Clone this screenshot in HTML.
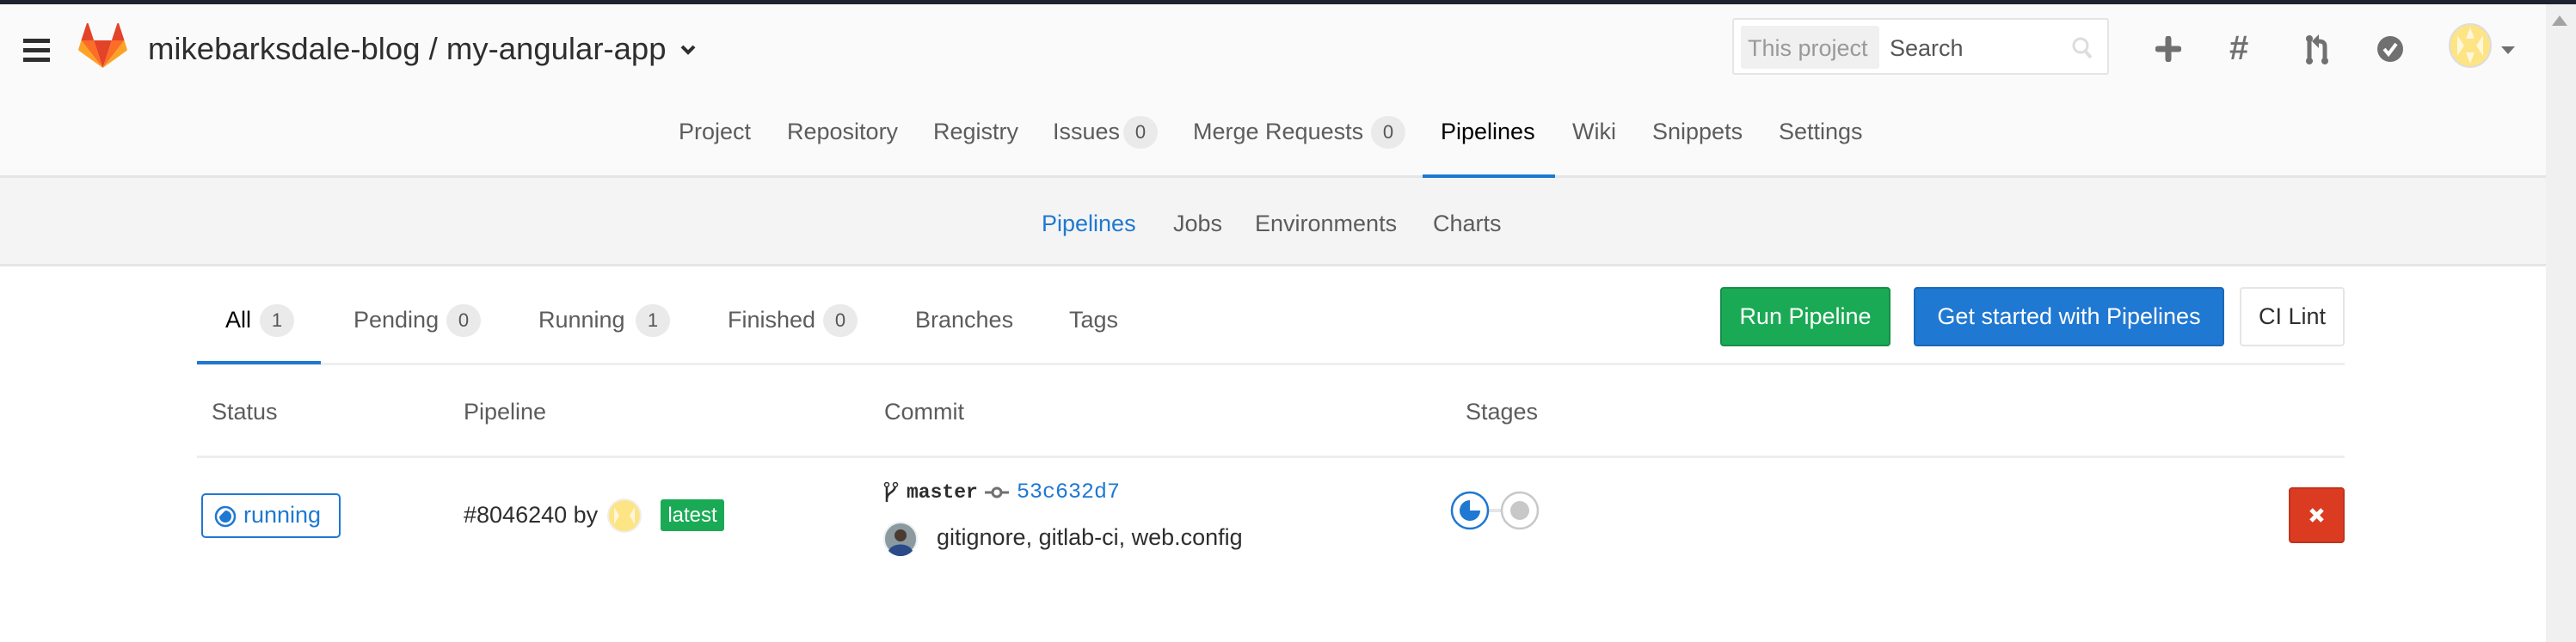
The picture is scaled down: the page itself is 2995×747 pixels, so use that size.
<!DOCTYPE html>
<html><head><meta charset="utf-8"><style>
*{margin:0;padding:0;box-sizing:border-box}
body{width:2995px;height:747px;overflow:hidden;background:#fff;font-family:"Liberation Sans",sans-serif;position:relative;color:#2e2e2e}
.a{position:absolute;white-space:nowrap}
.t{font-size:27px;line-height:40px}
.badge{position:absolute;background:#eaeaea;border-radius:20px;font-size:22px;line-height:38px;text-align:center;color:#555}
</style></head><body>
<div class="a" style="left:0;top:0;width:2995px;height:5px;background:#1f2330"></div>
<div class="a" style="left:0;top:5px;width:2960px;height:202px;background:#fafafa;border-bottom:3px solid #e5e5e5"></div>
<div class="a" style="left:0;top:207px;width:2960px;height:103px;background:#f4f4f4;border-bottom:3px solid #e5e5e5"></div>
<div class="a" style="left:2960px;top:5px;width:35px;height:742px;background:#f0f0f0"></div>
<div class="a" style="left:2967px;top:18px;width:0;height:0;border-left:9px solid transparent;border-right:9px solid transparent;border-bottom:12px solid #a3a3a3"></div>

<!-- hamburger -->
<div class="a" style="left:27px;top:45px;width:31px;height:5px;background:#2e2e2e"></div>
<div class="a" style="left:27px;top:56px;width:31px;height:5px;background:#2e2e2e"></div>
<div class="a" style="left:27px;top:67px;width:31px;height:5px;background:#2e2e2e"></div>
<!-- logo -->
<svg class="a" style="left:91px;top:27px" width="57" height="52" viewBox="0 0 36 33">
<path d="M18 33 L11.4 12.7 H24.6Z" fill="#e24329"/><path d="M18 33 L11.4 12.7 H2.1Z" fill="#fc6d26"/><path d="M2.1 12.7 L0.1 19 a1.4 1.4 0 0 0 .5 1.5 L18 33Z" fill="#fca326"/><path d="M2.1 12.7 H11.4 L7.4 0.4 a.7.7 0 0 0-1.3 0Z" fill="#e24329"/><path d="M18 33 L24.6 12.7 H33.9Z" fill="#fc6d26"/><path d="M33.9 12.7 L35.9 19 a1.4 1.4 0 0 1-.5 1.5 L18 33Z" fill="#fca326"/><path d="M33.9 12.7 H24.6 L28.6 .4 a.7.7 0 0 1 1.3 0Z" fill="#e24329"/></svg>
<div class="a" style="left:172px;top:34px;font-size:36.5px;line-height:46px;color:#2e2e2e">mikebarksdale-blog / my-angular-app</div>
<svg class="a" style="left:791px;top:52px" width="18" height="12" viewBox="0 0 18 12"><path d="M2 2 L9 9 L16 2" stroke="#2e2e2e" stroke-width="4" fill="none"/></svg>

<!-- search -->
<div class="a" style="left:2014px;top:21px;width:438px;height:66px;background:#fff;border:2px solid #e5e5e5;border-radius:3px"></div>
<div class="a" style="left:2024px;top:30px;width:161px;height:50px;background:#f0f0f0;border-radius:3px"></div>
<div class="a t" style="left:2032px;top:36px;color:#999">This project</div>
<div class="a t" style="left:2197px;top:36px;color:#555">Search</div>
<svg class="a" style="left:2408px;top:42px" width="26" height="28" viewBox="0 0 26 28"><circle cx="11" cy="11" r="8" stroke="#ddd" stroke-width="3" fill="none"/><path d="M17 18 L23 25" stroke="#ddd" stroke-width="4"/></svg>
<!-- icons -->
<svg class="a" style="left:2506px;top:42px" width="30" height="30" viewBox="0 0 30 30"><path d="M15 3V27M3 15H27" stroke="#707070" stroke-width="7" stroke-linecap="round"/></svg>
<div class="a" style="left:2592px;top:30px;font-size:40px;font-weight:bold;color:#707070;line-height:52px">#</div>
<svg class="a" style="left:2677px;top:38px" width="34" height="40" viewBox="0 0 34 40"><path d="M8 10V30" stroke="#707070" stroke-width="5" fill="none"/><circle cx="8" cy="7" r="4" fill="#707070"/><circle cx="8" cy="33" r="4" fill="#707070"/><path d="M26 30V16C26 11 23 10 18 10" stroke="#707070" stroke-width="5" fill="none"/><circle cx="26" cy="33" r="4" fill="#707070"/><path d="M19 2L19 18L11 10Z" fill="#707070"/></svg>
<svg class="a" style="left:2763px;top:40px" width="32" height="34" viewBox="0 0 32 34"><circle cx="16" cy="17" r="15" fill="#707070"/><path d="M9 17 L14 23 L23 11" stroke="#fff" stroke-width="4" fill="none"/></svg>
<svg class="a" style="left:2847px;top:27px" width="50" height="52" viewBox="0 0 50 52"><ellipse cx="25" cy="26" rx="24" ry="25" fill="#fde485" stroke="#ddd" stroke-width="2"/><path d="M10 14L18 26L10 38M40 14L32 26L40 38M25 5L20 18H30ZM25 47L20 34H30Z" fill="#fff" opacity=".7"/></svg>
<div class="a" style="left:2908px;top:54px;border-left:8px solid transparent;border-right:8px solid transparent;border-top:9px solid #707070"></div>

<!-- nav -->
<div class="a t" style="left:789px;top:133px;color:#5c5c5c">Project</div>
<div class="a t" style="left:915px;top:133px;color:#5c5c5c">Repository</div>
<div class="a t" style="left:1085px;top:133px;color:#5c5c5c">Registry</div>
<div class="a t" style="left:1224px;top:133px;color:#5c5c5c">Issues</div>
<div class="badge" style="left:1306px;top:135px;width:40px">0</div>
<div class="a t" style="left:1387px;top:133px;color:#5c5c5c">Merge Requests</div>
<div class="badge" style="left:1594px;top:135px;width:40px">0</div>
<div class="a t" style="left:1675px;top:133px;color:#000">Pipelines</div>
<div class="a" style="left:1654px;top:203px;width:154px;height:4px;background:#1f78d1"></div>
<div class="a t" style="left:1828px;top:133px;color:#5c5c5c">Wiki</div>
<div class="a t" style="left:1921px;top:133px;color:#5c5c5c">Snippets</div>
<div class="a t" style="left:2068px;top:133px;color:#5c5c5c">Settings</div>

<div class="a t" style="left:1211px;top:240px;color:#1f78d1">Pipelines</div>
<div class="a t" style="left:1364px;top:240px;color:#5c5c5c">Jobs</div>
<div class="a t" style="left:1459px;top:240px;color:#5c5c5c">Environments</div>
<div class="a t" style="left:1666px;top:240px;color:#5c5c5c">Charts</div>

<!-- tabs -->
<div class="a" style="left:229px;top:422px;width:2497px;height:3px;background:#eee"></div>
<div class="a" style="left:229px;top:420px;width:144px;height:4px;background:#1f78d1"></div>
<div class="a t" style="left:262px;top:352px;color:#000">All</div>
<div class="badge" style="left:302px;top:354px;width:40px">1</div>
<div class="a t" style="left:411px;top:352px;color:#5c5c5c">Pending</div>
<div class="badge" style="left:519px;top:354px;width:40px">0</div>
<div class="a t" style="left:626px;top:352px;color:#5c5c5c">Running</div>
<div class="badge" style="left:739px;top:354px;width:40px">1</div>
<div class="a t" style="left:846px;top:352px;color:#5c5c5c">Finished</div>
<div class="badge" style="left:957px;top:354px;width:40px">0</div>
<div class="a t" style="left:1064px;top:352px;color:#5c5c5c">Branches</div>
<div class="a t" style="left:1243px;top:352px;color:#5c5c5c">Tags</div>

<div class="a" style="left:2000px;top:334px;width:198px;height:69px;background:#1aaa55;border:2px solid #168f48;border-radius:4px;color:#fff;font-size:27px;line-height:65px;text-align:center">Run Pipeline</div>
<div class="a" style="left:2225px;top:334px;width:361px;height:69px;background:#1f78d1;border:2px solid #1b69b6;border-radius:4px;color:#fff;font-size:27px;line-height:65px;text-align:center">Get started with Pipelines</div>
<div class="a" style="left:2604px;top:334px;width:122px;height:69px;background:#fff;border:2px solid #e5e5e5;border-radius:4px;color:#2e2e2e;font-size:27px;line-height:65px;text-align:center">CI Lint</div>

<!-- table -->
<div class="a t" style="left:246px;top:459px;color:#5c5c5c">Status</div>
<div class="a t" style="left:539px;top:459px;color:#5c5c5c">Pipeline</div>
<div class="a t" style="left:1028px;top:459px;color:#5c5c5c">Commit</div>
<div class="a t" style="left:1704px;top:459px;color:#5c5c5c">Stages</div>
<div class="a" style="left:229px;top:530px;width:2497px;height:3px;background:#eee"></div>

<div class="a" style="left:234px;top:574px;width:162px;height:52px;border:2px solid #1f78d1;border-radius:5px"></div>
<svg class="a" style="left:249px;top:588px" width="26" height="26" viewBox="0 0 26 26"><circle cx="13" cy="13" r="11" stroke="#1f78d1" stroke-width="2.5" fill="none"/><path d="M13 6A7 7 0 1 1 6 13Z" fill="#1f78d1"/></svg>
<div class="a t" style="left:283px;top:579px;color:#1f78d1">running</div>

<div class="a t" style="left:539px;top:579px;color:#2e2e2e">#8046240 by</div>
<svg class="a" style="left:706px;top:580px" width="40" height="40" viewBox="0 0 40 40"><circle cx="20" cy="20" r="19" fill="#fde485" stroke="#eee" stroke-width="2"/><path d="M8 10L14 20L8 30M32 10L26 20L32 30" fill="#fff" opacity=".7"/></svg>
<div class="a" style="left:768px;top:581px;width:74px;height:37px;background:#1aaa55;border-radius:3px;color:#fff;font-size:24px;line-height:37px;text-align:center">latest</div>

<svg class="a" style="left:1026px;top:561px" width="20" height="26" viewBox="0 0 20 26"><path d="M5 3V23M15 3C15 13 5 11 5 20" stroke="#2e2e2e" stroke-width="2.5" fill="none"/><circle cx="5" cy="3" r="2.5" fill="#fff" stroke="#2e2e2e" stroke-width="1.5"/><circle cx="15" cy="3" r="2.5" fill="#fff" stroke="#2e2e2e" stroke-width="1.5"/></svg>
<div class="a" style="left:1054px;top:558px;font-family:'Liberation Mono',monospace;font-weight:bold;font-size:23px;line-height:30px">master</div>
<svg class="a" style="left:1145px;top:565px" width="28" height="16" viewBox="0 0 28 16"><path d="M0 8H28" stroke="#707070" stroke-width="3"/><circle cx="14" cy="8" r="5" fill="#fff" stroke="#707070" stroke-width="3"/></svg>
<div class="a" style="left:1182px;top:558px;font-family:'Liberation Mono',monospace;font-size:25px;line-height:30px;color:#1f78d1">53c632d7</div>
<svg class="a" style="left:1027px;top:607px" width="40" height="40" viewBox="0 0 40 40"><circle cx="20" cy="20" r="19" fill="#8a9aa0" stroke="#eee" stroke-width="2"/><circle cx="20" cy="16" r="7" fill="#4a3a30"/><path d="M6 34C10 24 30 24 34 34A19 19 0 0 1 6 34Z" fill="#2b4a8a"/></svg>
<div class="a t" style="left:1089px;top:605px;color:#2e2e2e">gitignore, gitlab-ci, web.config</div>

<div class="a" style="left:1730px;top:592px;width:16px;height:4px;background:#e5e5e5"></div>
<svg class="a" style="left:1686px;top:571px" width="46" height="46" viewBox="0 0 46 46"><circle cx="23" cy="23" r="21" fill="#fff" stroke="#1f78d1" stroke-width="2.5"/><path d="M23 11A12 12 0 1 1 11 23L23 23Z" fill="#1f78d1" transform="rotate(90 23 23)"/></svg>
<svg class="a" style="left:1744px;top:571px" width="46" height="46" viewBox="0 0 46 46"><circle cx="23" cy="23" r="21" fill="#fff" stroke="#c8c8c8" stroke-width="2.5"/><circle cx="23" cy="23" r="11" fill="#c8c8c8"/></svg>

<div class="a" style="left:2661px;top:567px;width:65px;height:65px;background:#db3b21;border:2px solid #c0341d;border-radius:4px"></div>
<svg class="a" style="left:2683px;top:589px" width="21" height="21" viewBox="0 0 21 21"><path d="M4 4L17 17M17 4L4 17" stroke="#fff" stroke-width="5"/></svg>
</body></html>
